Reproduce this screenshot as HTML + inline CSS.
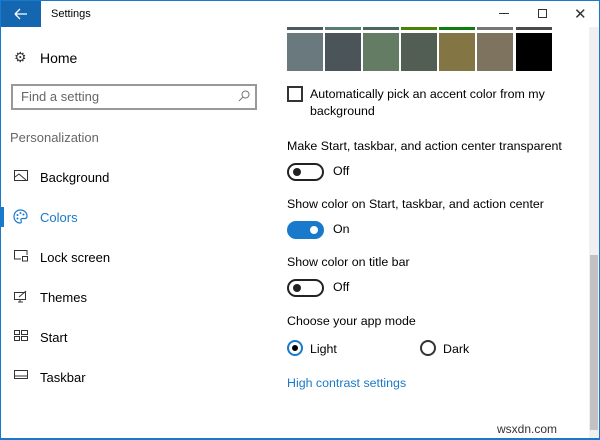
<!DOCTYPE html>
<html><head><style>
*{margin:0;padding:0;box-sizing:border-box}
body{width:600px;height:440px;overflow:hidden;background:#fff;font-family:"Liberation Sans",sans-serif;color:#000;position:relative}
.win{position:absolute;left:0;top:0;width:600px;height:440px;border:1px solid #1979ca;border-bottom-width:2px}
.a{position:absolute;white-space:nowrap}
.t{font-size:12.4px}
.nav{font-size:13px;color:#000}
.sw{position:absolute;top:33px;width:36px;height:38px}
.st{position:absolute;top:27px;width:36px;height:3px}
.tg{position:absolute;width:37px;height:18px;border:2px solid #222;border-radius:9px}
.tg i{position:absolute;top:3px;width:8px;height:8px;border-radius:50%;background:#222}
</style></head><body>
<div class="win"></div>
<div class="a" style="left:1px;top:1px;width:40px;height:26px;background:#1466b0"></div>
<svg class="a" style="left:13px;top:7px" width="16" height="14"><path d="M2 7H14M2 7L7 2M2 7L7 12" stroke="#fff" stroke-width="1.3" fill="none"/></svg>
<div class="a" style="left:51px;top:8px;font-size:11px">Settings</div>
<div class="a" style="left:499px;top:13px;width:10px;height:1px;background:#333"></div>
<div class="a" style="left:538px;top:9px;width:9px;height:9px;border:1px solid #333"></div>
<div class="a" style="left:574px;top:5px;font-size:15px;color:#333">✕</div>

<div class="a" style="left:14px;top:49px;font-size:14px;color:#333">⚙</div>
<div class="a nav" style="left:40px;top:50px;font-size:14px">Home</div>
<div class="a" style="left:11px;top:84px;width:246px;height:26px;border:2px solid #999"></div>
<div class="a" style="left:21px;top:89px;font-size:13px;color:#666">Find a setting</div>
<svg class="a" style="left:238px;top:90px" width="12" height="12"><circle cx="7.5" cy="4.5" r="3.5" stroke="#777" fill="none"/><path d="M5 7L1 11" stroke="#777"/></svg>
<div class="a" style="left:10px;top:130px;font-size:13px;color:#666">Personalization</div>
<div class="a" style="left:1px;top:207px;width:3px;height:20px;background:#1979ca"></div>
<svg class="a" style="left:14px;top:170px" width="14" height="12"><rect x="0.5" y="0.5" width="13" height="10" fill="none" stroke="#333"/><path d="M1 7L5 4L12 10" stroke="#333" fill="none"/></svg>
<div class="a nav" style="left:40px;top:170px">Background</div>
<svg class="a" style="left:13px;top:209px" width="15" height="15"><path d="M7.5 1C3.5 1 1 4 1 7.5C1 11 3.5 14 7 14C8.5 14 8.5 12.5 8 11.5C7.5 10.5 8 9.5 9.5 9.5H12C13.5 9.5 14 8.5 14 7C14 3.5 11 1 7.5 1Z" fill="none" stroke="#1979ca" stroke-width="1.2"/><circle cx="4.5" cy="6" r="1" fill="#1979ca"/><circle cx="7.5" cy="4" r="1" fill="#1979ca"/><circle cx="10.5" cy="5.5" r="1" fill="#1979ca"/><circle cx="4.5" cy="9.5" r="1" fill="#1979ca"/></svg>
<div class="a nav" style="left:40px;top:210px;color:#1979ca">Colors</div>
<svg class="a" style="left:14px;top:250px" width="14" height="12"><path d="M7 9H0.5V0.5H13V5" fill="none" stroke="#333"/><rect x="8.5" y="6.5" width="5" height="4.5" fill="none" stroke="#333"/></svg>
<div class="a nav" style="left:40px;top:250px">Lock screen</div>
<svg class="a" style="left:14px;top:290px" width="14" height="13"><rect x="0.5" y="2.5" width="11" height="7" fill="none" stroke="#333"/><path d="M4 12H9M6 10V12M5 7L12 1" stroke="#333" fill="none"/></svg>
<div class="a nav" style="left:40px;top:290px">Themes</div>
<svg class="a" style="left:14px;top:330px" width="14" height="12"><rect x="0.5" y="0.5" width="5" height="4" fill="none" stroke="#333"/><rect x="7.5" y="0.5" width="6" height="4" fill="none" stroke="#333"/><rect x="0.5" y="6.5" width="5" height="4" fill="none" stroke="#333"/><rect x="7.5" y="6.5" width="6" height="4" fill="none" stroke="#333"/></svg>
<div class="a nav" style="left:40px;top:330px">Start</div>
<svg class="a" style="left:14px;top:370px" width="14" height="10"><rect x="0.5" y="0.5" width="13" height="8" fill="none" stroke="#333"/><path d="M1 6H13" stroke="#333"/></svg>
<div class="a nav" style="left:40px;top:370px">Taskbar</div>

<div class="st" style="left:287px;background:#4c5a64"></div><div class="sw" style="left:287px;background:#69797e"></div>
<div class="st" style="left:325px;background:#567c73"></div><div class="sw" style="left:325px;background:#4a5459"></div>
<div class="st" style="left:363px;background:#486860"></div><div class="sw" style="left:363px;background:#647c64"></div>
<div class="st" style="left:401px;background:#498205"></div><div class="sw" style="left:401px;background:#525e54"></div>
<div class="st" style="left:439px;background:#107c10"></div><div class="sw" style="left:439px;background:#847545"></div>
<div class="st" style="left:477px;background:#767676"></div><div class="sw" style="left:477px;background:#7e735f"></div>
<div class="st" style="left:516px;background:#4c4a48"></div><div class="sw" style="left:516px;background:#000"></div>

<div class="a" style="left:287px;top:86px;width:16px;height:16px;border:2px solid #333"></div>
<div class="a t" style="left:310px;top:86px;line-height:17px;white-space:normal;width:260px">Automatically pick an accent color from my background</div>
<div class="a t" style="left:287px;top:139px">Make Start, taskbar, and action center transparent</div>
<div class="tg" style="left:287px;top:163px"><i style="left:4px"></i></div>
<div class="a t" style="left:333px;top:164px">Off</div>
<div class="a t" style="left:287px;top:197px">Show color on Start, taskbar, and action center</div>
<div class="tg" style="left:287px;top:221px;background:#1979ca;border-color:#1979ca"><i style="left:21px;background:#fff"></i></div>
<div class="a t" style="left:333px;top:222px">On</div>
<div class="a t" style="left:287px;top:255px">Show color on title bar</div>
<div class="tg" style="left:287px;top:279px"><i style="left:4px"></i></div>
<div class="a t" style="left:333px;top:280px">Off</div>
<div class="a t" style="left:287px;top:314px">Choose your app mode</div>
<div class="a" style="left:287px;top:340px;width:16px;height:16px;border:2px solid #1979ca;border-radius:50%"></div>
<div class="a" style="left:292px;top:345px;width:6px;height:6px;background:#000;border-radius:50%"></div>
<div class="a t" style="left:310px;top:342px">Light</div>
<div class="a" style="left:420px;top:340px;width:16px;height:16px;border:2px solid #333;border-radius:50%"></div>
<div class="a t" style="left:443px;top:342px">Dark</div>
<div class="a t" style="left:287px;top:376px;color:#1979ca">High contrast settings</div>

<div class="a" style="left:589px;top:27px;width:10px;height:411px;background:#f0f0f0"></div>
<div class="a" style="left:590px;top:255px;width:8px;height:175px;background:#c2c2c2"></div>
<div class="a" style="left:497px;top:422px;font-size:12px;color:#333">wsxdn.com</div>
</body></html>
